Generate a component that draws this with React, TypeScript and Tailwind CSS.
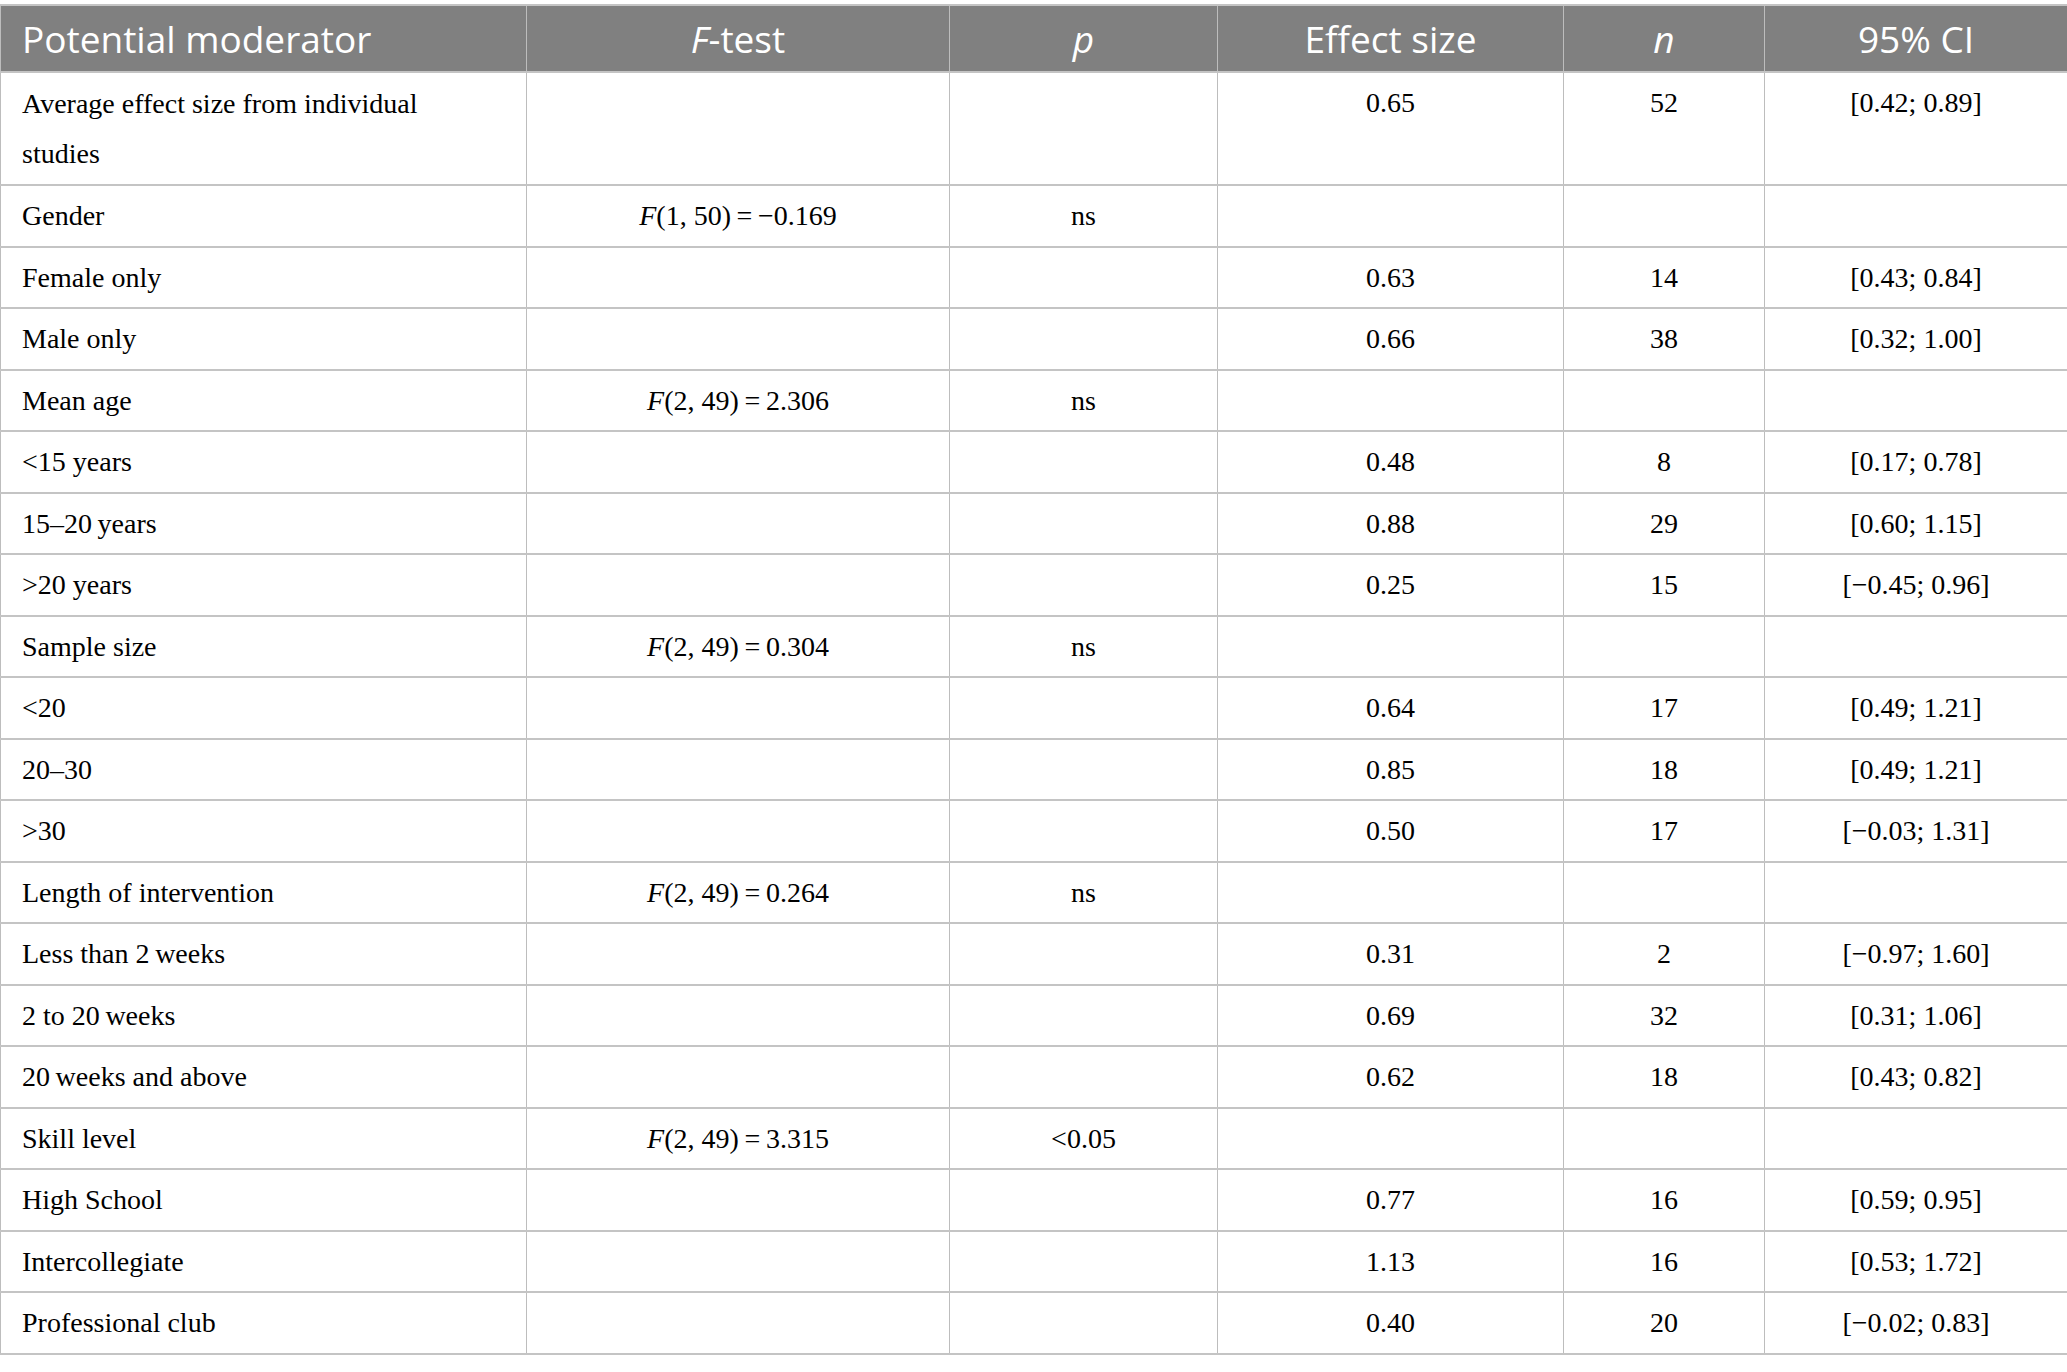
import React from "react";

type Row = {
  label: React.ReactNode;
  f?: [string, string];
  p?: string;
  es?: string;
  n?: string;
  ci?: string;
};

const T = "\u2009";

const rows: Row[] = [
  { label: <>Average effect size from individual<br />studies</>, es: "0.65", n: "52", ci: "[0.42; 0.89]" },
  { label: "Gender", f: ["(1, 50)", "−0.169"], p: "ns" },
  { label: "Female only", es: "0.63", n: "14", ci: "[0.43; 0.84]" },
  { label: "Male only", es: "0.66", n: "38", ci: "[0.32; 1.00]" },
  { label: "Mean age", f: ["(2, 49)", "2.306"], p: "ns" },
  { label: "<15 years", es: "0.48", n: "8", ci: "[0.17; 0.78]" },
  { label: `15–20${T}years`, es: "0.88", n: "29", ci: "[0.60; 1.15]" },
  { label: ">20 years", es: "0.25", n: "15", ci: "[−0.45; 0.96]" },
  { label: "Sample size", f: ["(2, 49)", "0.304"], p: "ns" },
  { label: "<20", es: "0.64", n: "17", ci: "[0.49; 1.21]" },
  { label: "20–30", es: "0.85", n: "18", ci: "[0.49; 1.21]" },
  { label: ">30", es: "0.50", n: "17", ci: "[−0.03; 1.31]" },
  { label: "Length of intervention", f: ["(2, 49)", "0.264"], p: "ns" },
  { label: `Less than 2${T}weeks`, es: "0.31", n: "2", ci: "[−0.97; 1.60]" },
  { label: `2 to 20${T}weeks`, es: "0.69", n: "32", ci: "[0.31; 1.06]" },
  { label: `20${T}weeks and above`, es: "0.62", n: "18", ci: "[0.43; 0.82]" },
  { label: "Skill level", f: ["(2, 49)", "3.315"], p: "<0.05" },
  { label: "High School", es: "0.77", n: "16", ci: "[0.59; 0.95]" },
  { label: "Intercollegiate", es: "1.13", n: "16", ci: "[0.53; 1.72]" },
  { label: "Professional club", es: "0.40", n: "20", ci: "[−0.02; 0.83]" },
];

const th = "border-x border-[#bdbdbd] pt-[8px] pb-[7px] leading-[50px] font-normal text-center";
const td = "border-x border-[#bdbdbd] py-[5px] leading-[49.5px] align-top text-center";

export default function App() {
  return (
    <div className="w-[2067px] h-[1372px] bg-white pt-[4px]">
      <table className="w-[2067px] table-fixed border-collapse">
        <colgroup>
          <col className="w-[526px]" />
          <col className="w-[423px]" />
          <col className="w-[268px]" />
          <col className="w-[346px]" />
          <col className="w-[201px]" />
          <col className="w-[303px]" />
        </colgroup>
        <thead>
          <tr className="bg-[#808080] text-white text-[37px] border-y-2 border-y-[#c4c4c4] [font-family:'Open_Sans',sans-serif]">
            <th className={`${th} text-left pl-[21px]`}>Potential moderator</th>
            <th className={th}><i>F</i>-test</th>
            <th className={th}><i>p</i></th>
            <th className={th}>Effect size</th>
            <th className={th}><i>n</i></th>
            <th className={th}>95% CI</th>
          </tr>
        </thead>
        <tbody className="text-[28px] text-black [font-family:'Liberation_Serif',serif]">
          {rows.map((r, i) => (
            <tr key={i} className="border-b-2 border-b-[#c4c4c4]">
              <td className={`${td} text-left pl-[21px] ${i === 0 ? "pt-[6px] pb-[6px]" : ""}`}>{r.label}</td>
              <td className={td}>
                {r.f && (
                  <>
                    <i>F</i>
                    {r.f[0]}
                    {T}={T}
                    {r.f[1]}
                  </>
                )}
              </td>
              <td className={td}>{r.p}</td>
              <td className={td}>{r.es}</td>
              <td className={td}>{r.n}</td>
              <td className={td}>{r.ci}</td>
            </tr>
          ))}
        </tbody>
      </table>
    </div>
  );
}
